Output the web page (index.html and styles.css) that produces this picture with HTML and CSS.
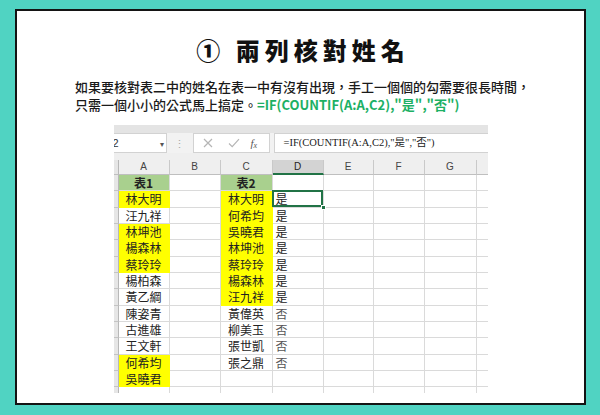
FILE: index.html
```html
<!DOCTYPE html>
<html lang="zh-Hant">
<head>
<meta charset="utf-8">
<link rel="stylesheet" href="styles.css">
</head>
<body>
<div class="card">
  <h1 class="title">① 兩列核對姓名</h1>
  <p class="desc">如果要核對表二中的姓名在表一中有沒有出現，手工一個個的勾需要很長時間，<br>只需一個小小的公式馬上搞定。<span class="formula">=IF(COUNTIF(A:A,C2),"是","否")</span></p>
  <div class="sheet">
    <div class="topband"></div>
    <div class="fbar">
      <div class="namebox"><span class="nb-text">2</span><span class="nb-arrow">▾</span></div>
      <div class="dots">⋮</div>
      <div class="fxbox">
        <svg class="ico" width="10" height="10" viewBox="0 0 10 10"><path d="M1 1L9 9M9 1L1 9" stroke="#b5b5b5" stroke-width="1.2" fill="none"/></svg>
        <svg class="ico" width="12" height="10" viewBox="0 0 12 10"><path d="M1 5.5L4.2 8.6L11 1.2" stroke="#b5b5b5" stroke-width="1.2" fill="none"/></svg>
        <span class="fx">f<sub>x</sub></span>
      </div>
      <div class="finput">=IF(COUNTIF(A:A,C2),"是","否")</div>
    </div>
    <div class="gap"></div>
    <div class="grid">
      <div class="hc rh"></div><div class="hc">A</div><div class="hc">B</div><div class="hc">C</div><div class="hc sel">D</div><div class="hc">E</div><div class="hc">F</div><div class="hc">G</div><div class="hc last"></div>

      <div class="c rh"></div><div class="c hd">表1</div><div class="c"></div><div class="c hd">表2</div><div class="c l"></div><div class="c"></div><div class="c"></div><div class="c"></div><div class="c last"></div>

      <div class="c rh"></div><div class="c y">林大明</div><div class="c"></div><div class="c y">林大明</div><div class="c l active">是</div><div class="c"></div><div class="c"></div><div class="c"></div><div class="c last"></div>

      <div class="c rh"></div><div class="c">汪九祥</div><div class="c"></div><div class="c y">何希均</div><div class="c l">是</div><div class="c"></div><div class="c"></div><div class="c"></div><div class="c last"></div>

      <div class="c rh"></div><div class="c y">林坤池</div><div class="c"></div><div class="c y">吳曉君</div><div class="c l">是</div><div class="c"></div><div class="c"></div><div class="c"></div><div class="c last"></div>

      <div class="c rh"></div><div class="c y">楊森林</div><div class="c"></div><div class="c y">林坤池</div><div class="c l">是</div><div class="c"></div><div class="c"></div><div class="c"></div><div class="c last"></div>

      <div class="c rh"></div><div class="c y">蔡玲玲</div><div class="c"></div><div class="c y">蔡玲玲</div><div class="c l">是</div><div class="c"></div><div class="c"></div><div class="c"></div><div class="c last"></div>

      <div class="c rh"></div><div class="c">楊柏森</div><div class="c"></div><div class="c y">楊森林</div><div class="c l">是</div><div class="c"></div><div class="c"></div><div class="c"></div><div class="c last"></div>

      <div class="c rh"></div><div class="c">黃乙綱</div><div class="c"></div><div class="c y">汪九祥</div><div class="c l">是</div><div class="c"></div><div class="c"></div><div class="c"></div><div class="c last"></div>

      <div class="c rh"></div><div class="c">陳姿青</div><div class="c"></div><div class="c">黃偉英</div><div class="c l no">否</div><div class="c"></div><div class="c"></div><div class="c"></div><div class="c last"></div>

      <div class="c rh"></div><div class="c">古進雄</div><div class="c"></div><div class="c">柳美玉</div><div class="c l no">否</div><div class="c"></div><div class="c"></div><div class="c"></div><div class="c last"></div>

      <div class="c rh"></div><div class="c">王文軒</div><div class="c"></div><div class="c">張世凱</div><div class="c l no">否</div><div class="c"></div><div class="c"></div><div class="c"></div><div class="c last"></div>

      <div class="c rh"></div><div class="c y">何希均</div><div class="c"></div><div class="c">張之鼎</div><div class="c l no">否</div><div class="c"></div><div class="c"></div><div class="c"></div><div class="c last"></div>

      <div class="c rh"></div><div class="c y">吳曉君</div><div class="c"></div><div class="c"></div><div class="c l"></div><div class="c"></div><div class="c"></div><div class="c"></div><div class="c last"></div>

      <div class="c rh"></div><div class="c"></div><div class="c"></div><div class="c"></div><div class="c l"></div><div class="c"></div><div class="c"></div><div class="c"></div><div class="c last"></div>
    </div>
  </div>
</div>
</body>
</html>
```

FILE: styles.css
```css
html, body {
  margin: 0;
  padding: 0;
}
body {
  width: 600px;
  height: 415px;
  background: #50d3c2;
  padding: 9px 0 0 15px;
  box-sizing: border-box;
  font-family: "Noto Sans CJK TC", "Noto Sans", sans-serif;
  overflow: hidden;
}
.card {
  width: 571px;
  height: 396px;
  box-sizing: border-box;
  border: 2px solid #141414;
  background: #fff;
  display: flex;
  flex-direction: column;
}
.title {
  margin: 24px 0 0;
  font-size: 24px;
  line-height: 30px;
  font-weight: 900;
  letter-spacing: 5px;
  text-align: center;
  color: #111;
  padding-left: 5px;
}
.desc {
  margin: 13px 0 0;
  padding-left: 58px;
  font-size: 13px;
  line-height: 18px;
  font-weight: 500;
  color: #1a1a1a;
  white-space: nowrap;
}
.formula {
  color: #1cb064;
  font-weight: 700;
}
.sheet {
  margin: 11px auto 0;
  width: 374px;
  height: 268px;
  overflow: hidden;
  background: #fff;
  font-family: "Noto Sans CJK TC", sans-serif;
}
.topband {
  height: 8px;
  background: #e4e4e4;
}
.fbar {
  height: 20px;
  background: #f2f2f2;
  display: flex;
  align-items: stretch;
}
.namebox {
  width: 53px;
  background: #fff;
  border: 1px solid #d2d2d2;
  border-left: none;
  box-sizing: border-box;
  display: flex;
  align-items: center;
  justify-content: space-between;
  font-size: 11px;
  color: #333;
  overflow: hidden;
}
.nb-text {
  margin-left: -1px;
  font-family: "Liberation Sans", sans-serif;
}
.nb-arrow {
  font-size: 8px;
  color: #555;
  margin-right: 2px;
}
.dots {
  width: 26px;
  text-align: center;
  font-size: 11px;
  line-height: 20px;
  color: #a8a8a8;
}
.fxbox {
  width: 77px;
  background: #fff;
  border: 1px solid #d2d2d2;
  box-sizing: border-box;
  display: flex;
  align-items: center;
  padding-left: 9px;
}
.ico {
  display: block;
}
.fxbox .ico:first-child {
  margin-right: 15px;
}
.fxbox .ico:nth-child(2) {
  margin-right: 11px;
}
.fx {
  font-family: "Liberation Serif", serif;
  font-style: italic;
  font-size: 11px;
  color: #555;
}
.fx sub {
  font-size: 8px;
  vertical-align: -1px;
}
.finput {
  flex: 1;
  margin-left: 4px;
  background: #fff;
  border: 1px solid #d2d2d2;
  border-right: none;
  box-sizing: border-box;
  padding-left: 9px;
  font-family: "Liberation Serif", "Noto Sans CJK TC", serif;
  font-size: 10.5px;
  line-height: 18px;
  color: #222;
  white-space: nowrap;
}
.gap {
  height: 7px;
  background: #efefef;
}
.grid {
  display: grid;
  grid-template-columns: 5px 51px 51px 52px 51px 50px 51px 52px 11px;
  grid-template-rows: 15px;
  grid-auto-rows: 16.33px;
}
.hc {
  background: #efefef;
  border-right: 1px solid #c9c9c9;
  border-bottom: 1px solid #bfbfbf;
  box-sizing: border-box;
  font-family: "Liberation Sans", sans-serif;
  font-size: 10px;
  line-height: 14px;
  text-align: center;
  color: #444;
}
.hc.sel {
  background: #d3d3d3;
  border-bottom: 2px solid #217346;
  color: #222;
}
.hc.last, .c.last {
  border-right: none;
}
.rh {
  background: #e6e6e6;
  border-right: 1px solid #b8b8b8;
}
.c {
  border-right: 1px solid #dadada;
  border-bottom: 1px solid #dadada;
  box-sizing: border-box;
  font-size: 12px;
  line-height: 15px;
  text-align: center;
  color: #222;
  white-space: nowrap;
}
.c.rh {
  background: #e6e6e6;
  border-right: 1px solid #b8b8b8;
  border-bottom: 1px solid #c4c4c4;
}
.c.l {
  text-align: left;
  padding-left: 3px;
}
.c.no {
  color: #555;
}
.c.y {
  background: #ffff00;
  border-color: transparent;
}
.c.hd {
  background: #a9d08e;
  font-weight: 700;
}
.c.active {
  position: relative;
}
.c.active::after {
  content: "";
  position: absolute;
  left: -1px;
  top: -1px;
  right: 0;
  bottom: 0;
  border: 2px solid #217346;
}
.c.active::before {
  content: "";
  position: absolute;
  right: -3px;
  bottom: -3px;
  width: 5px;
  height: 5px;
  background: #217346;
  border: 1px solid #fff;
  box-sizing: border-box;
  z-index: 2;
}
```
